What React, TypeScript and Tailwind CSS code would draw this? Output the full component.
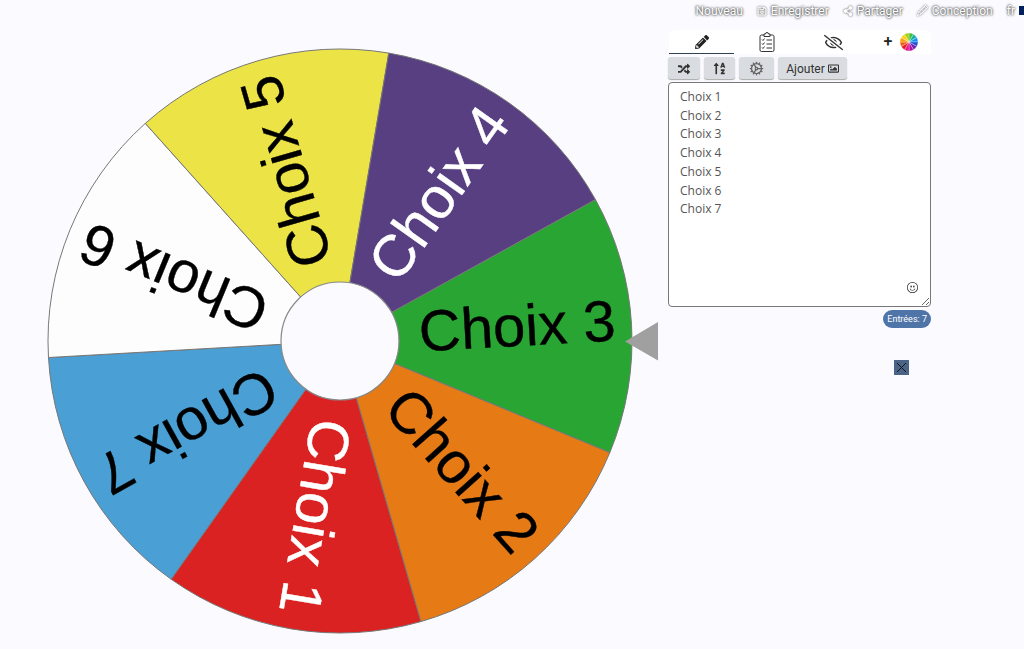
import { BsEmojiSmile, BsPencil } from "react-icons/bs";
import { FaPencilAlt, FaRandom, FaRegEyeSlash, FaRegImage, FaRegSave, FaShareAlt, FaSortAlphaUp } from "react-icons/fa";
import { Cog } from "lucide-react";

const CX = 340;
const CY = 341;
const R = 292;
const HUB = 59;
const STEP = 360 / 7;
const START = 73.9;

const slices = [
  { label: "Choix 1", fill: "#da2222", text: "#ffffff" },
  { label: "Choix 7", fill: "#4a9fd5", text: "#000000" },
  { label: "Choix 6", fill: "#fdfdfd", text: "#000000" },
  { label: "Choix 5", fill: "#ece447", text: "#000000" },
  { label: "Choix 4", fill: "#573f82", text: "#ffffff" },
  { label: "Choix 3", fill: "#28a532", text: "#000000" },
  { label: "Choix 2", fill: "#e67a14", text: "#000000" },
];

// clockwise from the top of the little colour wheel
const rainbow = ["#3ec03a", "#10b0a0", "#1090f0", "#2050d8", "#7020b0", "#b010a0", "#f0108a", "#e81820", "#f06010", "#f8a010", "#fcd010", "#a0d020"];

function point(cx: number, cy: number, r: number, deg: number) {
  const a = (deg * Math.PI) / 180;
  return `${(cx + r * Math.cos(a)).toFixed(2)} ${(cy + r * Math.sin(a)).toFixed(2)}`;
}

function Wheel() {
  return (
    <svg width="660" height="649" className="block shrink-0">
      {slices.map((s, i) => {
        const from = START + i * STEP;
        const to = from + STEP;
        const mid = from + STEP / 2;
        return (
          <g key={s.label}>
            <path
              d={`M${CX} ${CY} L${point(CX, CY, R, from)} A${R} ${R} 0 0 1 ${point(CX, CY, R, to)} Z`}
              fill={s.fill}
              stroke="#777777"
              strokeWidth="1"
            />
            <text
              transform={`translate(${CX} ${CY}) rotate(${mid}) translate(276 15)`}
              textAnchor="end"
              fontFamily="'Liberation Sans', Arial, sans-serif"
              fontSize="58"
              fill={s.text}
              stroke={s.text}
              strokeWidth="0.4"
            >
              {s.label}
            </text>
          </g>
        );
      })}
      <circle cx={CX} cy={CY} r={HUB} fill="#fbfaff" stroke="#888888" strokeWidth="1.2" />
      <polygon points="625,341.5 658,322 658,360.5" fill="#a0a0a0" />
    </svg>
  );
}

function ColorWheel() {
  return (
    <svg width="18" height="18" viewBox="0 0 18 18">
      {rainbow.map((c, i) => (
        <path
          key={c}
          d={`M9 9 L${point(9, 9, 9, i * 30 - 90)} A9 9 0 0 1 ${point(9, 9, 9, i * 30 - 60)} Z`}
          fill={c}
          stroke="#ffffff"
          strokeWidth="0.3"
        />
      ))}
    </svg>
  );
}

function ClipboardIcon() {
  return (
    <svg width="16" height="20" viewBox="0 0 16 20" fill="none" stroke="#333333" strokeWidth="1">
      <rect x="1" y="3" width="14" height="16.5" rx="1.5" />
      <path d="M5 3 V2 H6.5 A1.5 1.5 0 0 1 9.5 2 H11 V4.5 H5 Z" fill="#ffffff" />
      <path d="M3 7.5 L4 8.5 L5.5 6.5 M3 11.5 L4 12.5 L5.5 10.5 M3 15.5 L4 16.5 L5.5 14.5 M7.5 8 H13 M7.5 12 H13 M7.5 16 H13" />
    </svg>
  );
}

function Tool({ children, className }: { children: React.ReactNode; className: string }) {
  return (
    <button className={`flex h-[22px] items-center justify-center gap-[3px] rounded-[3px] bg-[#d9dce0] pt-[1px] text-[12px] text-[#333] shadow-[0_1px_1px_#aaa] ${className}`}>
      {children}
    </button>
  );
}

function NavItem({ icon, label }: { icon: React.ReactNode; label: string }) {
  return (
    <span className="ml-[14px] flex items-center gap-[4px]">
      <span className="[filter:drop-shadow(0_0_1px_#444)]">{icon}</span>
      {label}
    </span>
  );
}

export default function App() {
  return (
    <div className="flex h-[649px] w-[1024px] overflow-hidden bg-[#fbfbff] font-['Roboto',sans-serif]">
      <Wheel />
      <div className="ml-2 flex w-[356px] shrink-0 flex-col">
        <div className="flex h-[21px] items-center justify-end text-[12px] text-white [text-shadow:0_0_2px_#444,0_0_3px_#444]">
          <span>Nouveau</span>
          <NavItem icon={<FaRegSave size={10} />} label="Enregistrer" />
          <NavItem icon={<FaShareAlt size={10} />} label="Partager" />
          <NavItem icon={<BsPencil size={11} />} label="Conception" />
          <span className="ml-[14px] mr-[4px]">fr</span>
          <span className="h-[9px] w-[5px] bg-[#00205b]" />
        </div>
        <div className="mt-[9px] flex w-[263px] flex-col">
          <div className="flex h-[24px] w-[262px] items-center self-end rounded-t-[6px] bg-white">
            <div className="flex h-full w-[65px] items-center justify-center border-b border-[#334155] text-[#222]"><FaPencilAlt size={14} /></div>
            <div className="flex w-[66px] justify-center"><ClipboardIcon /></div>
            <div className="flex w-[66px] justify-center text-[#333]"><FaRegEyeSlash size={19} /></div>
            <div className="flex w-[65px] items-center justify-center gap-[8px] pl-[5px] text-[16px] font-medium text-[#222]">+<ColorWheel /></div>
          </div>
          <div className="mt-[3px] flex gap-[4px]">
            <Tool className="w-[32px]"><FaRandom size={12} /></Tool>
            <Tool className="w-[31px]"><FaSortAlphaUp size={13} /></Tool>
            <Tool className="w-[35px] text-[#666]"><Cog size={15} /></Tool>
            <Tool className="w-[69px]">Ajouter<FaRegImage size={11} /></Tool>
          </div>
          <div className="relative mt-[3px]">
            <textarea
              readOnly
              className="block h-[225px] w-full rounded-[4px] border border-[#777] bg-white px-[11px] py-[5px] font-['Open_Sans',sans-serif] text-[12px] leading-[18.7px] text-[#555]"
              value={"Choix 1\nChoix 2\nChoix 3\nChoix 4\nChoix 5\nChoix 6\nChoix 7"}
            />
            <BsEmojiSmile size={11} className="absolute bottom-[14px] right-[13px] text-[#222]" />
          </div>
          <div className="mt-[2.5px] self-end rounded-full bg-[#4f74a8] px-[4px] py-[2px] text-[9px] leading-[14px] text-white">Entrées: 7</div>
          <button className="ml-[226px] mt-[32px] flex h-[15px] w-[15px] items-center justify-center bg-[#4a6488]">
            <svg width="11" height="11" viewBox="0 0 11 11" stroke="#111111" strokeWidth="1">
              <path d="M1 1 L10 10 M10 1 L1 10" />
            </svg>
          </button>
        </div>
      </div>
    </div>
  );
}
